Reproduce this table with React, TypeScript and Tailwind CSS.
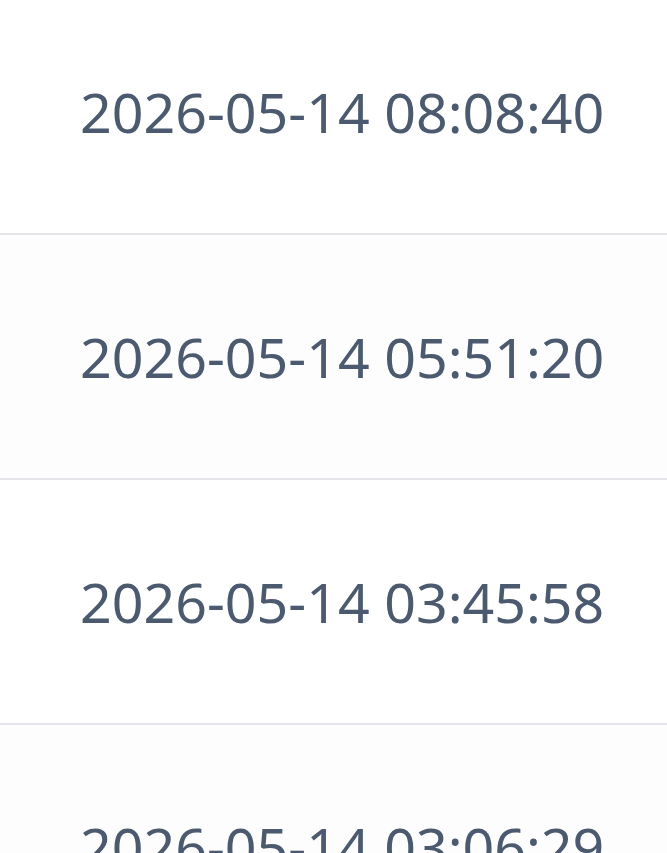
import React, { FC } from 'react';

const times: string[] = [
    '2026-05-14 08:08:40',
    '2026-05-14 05:51:20',
    '2026-05-14 03:45:58',
    '2026-05-14 03:06:29',
];

const App: FC = () => {
    return (
        <div className="w-full h-[853px] overflow-hidden bg-white" style={{ fontFamily: '"Noto Sans", "Open Sans", sans-serif' }}>
            {times.map((t, i) => (
                <div
                    key={t}
                    className={`flex items-center pl-[80px] border-b-2 border-[#e3e5e9] ${i === 0 ? 'h-[235px] pb-[10px]' : 'h-[245px]'} ${i % 2 === 1 ? 'bg-[#fdfdfd]' : 'bg-white'}`}
                >
                    <span className="text-[55.5px] leading-none text-[#4b5a6f] whitespace-nowrap">{t}</span>
                </div>
            ))}
        </div>
    );
};

export default App;
